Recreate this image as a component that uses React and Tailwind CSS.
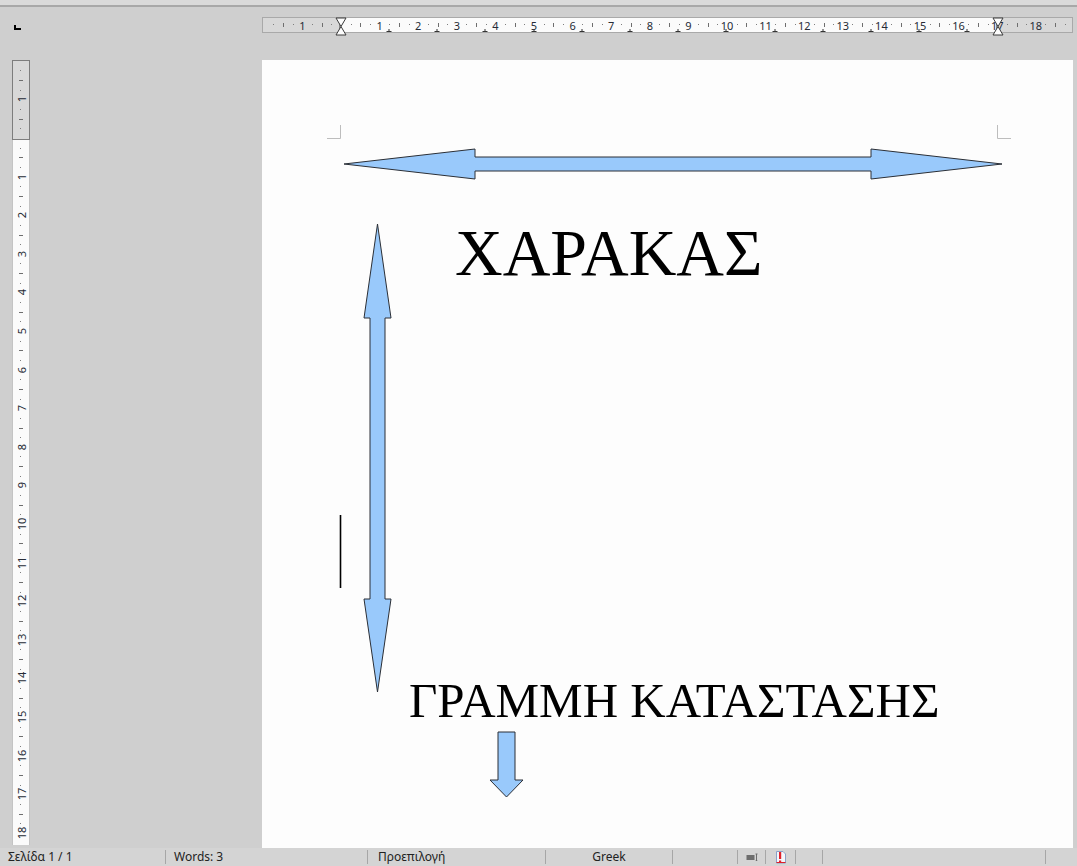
import React from "react";

const CM = 38.6;
const UI_FONT = { fontFamily: '"Noto Sans", "Open Sans", sans-serif' };
const SERIF = { fontFamily: '"Liberation Serif", "DejaVu Serif", serif' };

function Hourglass({ x }) {
  return (
    <svg
      className="absolute top-[-1px] -translate-x-1/2"
      style={{ left: x }}
      width="12"
      height="19"
      viewBox="0 0 12 19"
    >
      <path d="M1 1 H11 L6 9.5 Z" fill="#fdfdfd" stroke="#3a3a3a" strokeWidth="1" />
      <path d="M6 9.5 L11 18 H1 Z" fill="#fdfdfd" stroke="#3a3a3a" strokeWidth="1" />
    </svg>
  );
}

function HRuler() {
  const marks = [];
  for (let q = -8; q <= 76; q++) {
    if (q === 0) continue;
    const x = 78 + (q * CM) / 4;
    if (x < 4 || x > 806) continue;
    const r = ((q % 4) + 4) % 4;
    if (r === 0) {
      marks.push(
        <span
          key={q}
          className="absolute top-0 h-full flex items-center -translate-x-1/2 text-[11px] leading-none text-[#262b36]"
          style={{ left: x }}
        >
          {Math.abs(q / 4)}
        </span>
      );
    } else if (r === 2) {
      marks.push(
        <span key={q} className="absolute top-[5px] h-[4px] w-px bg-[#6e6e6e]" style={{ left: x }} />
      );
    } else {
      marks.push(
        <span key={q} className="absolute top-[6px] h-px w-px bg-[#7e7e7e]" style={{ left: x }} />
      );
    }
  }
  const tabs = [];
  for (let k = 0; k <= 12; k++) {
    const x = 126 + k * 48.2;
    tabs.push(
      <span key={k} className="absolute bottom-0 -translate-x-1/2 flex flex-col items-center" style={{ left: x }}>
        <span className="h-[2px] w-px bg-[#333]" />
        <span className="h-px w-[5px] bg-[#333]" />
      </span>
    );
  }
  return (
    <div className="relative h-[16px] w-[811px] flex border border-[#a9a9a9] bg-[#fbfbfb]" style={UI_FONT}>
      <div className="w-[77px] h-full bg-[#d8d8d8] border-r border-[#8a8a8a]" />
      <div className="flex-1 h-full" />
      <div className="w-[76px] h-full bg-[#d8d8d8] border-l border-[#8a8a8a]" />
      {marks}
      {tabs}
      <Hourglass x={78} />
      <Hourglass x={735} />
    </div>
  );
}

function VRuler() {
  const marks = [];
  for (let q = -7; q <= 74; q++) {
    if (q === 0) continue;
    const y = 78 + (q * CM) / 4;
    if (y < 4 || y > 780) continue;
    const r = ((q % 4) + 4) % 4;
    if (r === 0) {
      marks.push(
        <span
          key={q}
          className="absolute left-[8px] -translate-x-1/2 -translate-y-1/2 -rotate-90 text-[11px] leading-none text-[#262b36] whitespace-nowrap"
          style={{ top: y }}
        >
          {Math.abs(q / 4)}
        </span>
      );
    } else if (r === 2) {
      marks.push(
        <span key={q} className="absolute left-[6px] h-px w-[4px] bg-[#6e6e6e]" style={{ top: y }} />
      );
    } else {
      marks.push(
        <span key={q} className="absolute left-[7px] h-px w-px bg-[#7e7e7e]" style={{ top: y }} />
      );
    }
  }
  return (
    <div className="relative w-[18px] h-full flex flex-col bg-[#fbfbfb] border-x border-[#c4c4c4]" style={UI_FONT}>
      <div className="h-[78px] w-full bg-[#d8d8d8] border border-[#7d7d7d] -mx-px box-content" />
      <div className="flex-1" />
      {marks}
    </div>
  );
}

function Shapes() {
  const fill = "#99c9fb";
  const stroke = "#2b2f36";
  return (
    <svg className="absolute inset-0 pointer-events-none" width="811" height="788" viewBox="0 0 811 788">
      {/* text boundary corners */}
      <path d="M65 78.5 H78.5 V65" fill="none" stroke="#bdbdbd" strokeWidth="1" />
      <path d="M735.5 65 V78.5 H749" fill="none" stroke="#bdbdbd" strokeWidth="1" />
      {/* horizontal double arrow */}
      <path
        d="M82 104 L213 89 L213 97 L609 97 L609 89 L740 104 L609 119 L609 111 L213 111 L213 119 Z"
        fill={fill}
        stroke={stroke}
        strokeWidth="1"
        strokeLinejoin="miter"
      />
      {/* vertical double arrow */}
      <path
        d="M115.5 164 L129 258 L123 258 L123 539 L129 539 L115.5 632 L102 539 L108 539 L108 258 L102 258 Z"
        fill={fill}
        stroke={stroke}
        strokeWidth="1"
      />
      {/* small down arrow */}
      <path
        d="M236 672 L253 672 L253 720 L261 720 L244.5 737 L228 720 L236 720 Z"
        fill={fill}
        stroke={stroke}
        strokeWidth="1"
      />
      {/* text cursor */}
      <line x1="78.5" y1="455" x2="78.5" y2="528" stroke="#000" strokeWidth="1.6" />
    </svg>
  );
}

function Page() {
  return (
    <div className="relative w-[811px] flex-1 min-h-0 overflow-hidden bg-[#fdfdfd]">
      <div className="pl-[193px] pt-[160px] text-[66px] leading-[66px] text-black whitespace-nowrap" style={SERIF}>
        ΧΑΡΑΚΑΣ
      </div>
      <div className="pl-[147px] mt-[390px] text-[49px] leading-[49px] text-black whitespace-nowrap" style={SERIF}>
        ΓΡΑΜΜΗ ΚΑΤΑΣΤΑΣΗΣ
      </div>
      <Shapes />
    </div>
  );
}

function Sep() {
  return <div className="w-px h-[14px] bg-[#a6a6a6]" />;
}

function StatusBar() {
  return (
    <div className="h-[18px] flex items-center bg-[#d4d4d4] text-[12px] leading-none text-[#222]" style={UI_FONT}>
      <div className="w-[165px] pl-[8px]">Σελίδα 1 / 1</div>
      <Sep />
      <div className="w-[201px] pl-[8px]">Words: 3</div>
      <Sep />
      <div className="w-[177px] pl-[10px]">Προεπιλογή</div>
      <Sep />
      <div className="w-[126px] text-center">Greek</div>
      <Sep />
      <div className="w-[64px]" />
      <Sep />
      <div className="w-[27px] flex justify-center">
        <svg width="12" height="8" viewBox="0 0 12 8">
          <rect x="0.5" y="2" width="8" height="5" fill="#6d6d6d" />
          <path d="M10.5 1 V8 M9.5 1 H11.5 M9.5 8 H11.5" stroke="#6d6d6d" strokeWidth="1" />
        </svg>
      </div>
      <Sep />
      <div className="w-[29px] flex justify-center">
        <svg width="12" height="14" viewBox="0 0 12 14">
          <path d="M1.5 1.5 H8 L10.5 4 V13 H1.5 Z" fill="#f4f6fa" stroke="#8aa0c8" strokeWidth="1" />
          <rect x="4" y="2" width="2.2" height="7" fill="#e0202a" />
          <rect x="4" y="10.5" width="2.2" height="2" fill="#e0202a" />
          <rect x="1.5" y="12" width="9" height="1" fill="#e0202a" />
        </svg>
      </div>
      <Sep />
      <div className="w-[26px]" />
      <Sep />
      <div className="w-[222px]" />
      <Sep />
      <div className="flex-1" />
    </div>
  );
}

export default function App() {
  return (
    <div className="w-[1077px] h-[866px] flex flex-col overflow-hidden bg-[#cfcfcf]">
      <div className="h-[5px] bg-[#dadada]" />
      <div className="h-[2px] bg-[#a8a8a8]" />
      <div className="flex flex-1 min-h-0">
        <div className="w-[262px] flex flex-col">
          <div className="h-[53px] pl-[14px] pt-[18px]">
            <div className="w-[7px] h-[5px] border-l-2 border-b-2 border-black" />
          </div>
          <div className="flex-1 min-h-0 pl-[12px] pb-[3px]">
            <VRuler />
          </div>
        </div>
        <div className="w-[811px] flex flex-col">
          <div className="h-[53px] pt-[10px]">
            <HRuler />
          </div>
          <Page />
        </div>
      </div>
      <StatusBar />
    </div>
  );
}
